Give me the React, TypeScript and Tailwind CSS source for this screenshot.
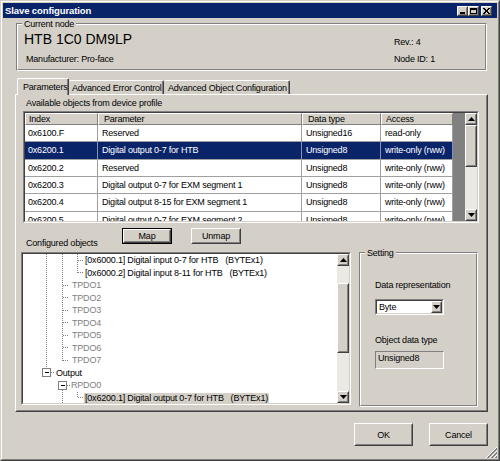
import React from 'react';

const F = "font-['Liberation_Sans',Arial,sans-serif]";

function Raised({ className = '', innerClassName = '', children }: { className?: string; innerClassName?: string; children?: React.ReactNode }) {
  return (
    <div className={`border border-t-white border-l-white border-r-[#404040] border-b-[#404040] ${className}`}>
      <div className={`w-full h-full border border-t-[#d4d0c8] border-l-[#d4d0c8] border-r-[#808080] border-b-[#808080] bg-[#d4d0c8] ${innerClassName}`}>
        {children}
      </div>
    </div>
  );
}

function Sunken({ className = '', innerClassName = '', children }: { className?: string; innerClassName?: string; children?: React.ReactNode }) {
  return (
    <div className={`border border-t-[#808080] border-l-[#808080] border-r-white border-b-white ${className}`}>
      <div className={`w-full h-full border border-t-[#404040] border-l-[#404040] border-r-[#d4d0c8] border-b-[#d4d0c8] ${innerClassName}`}>
        {children}
      </div>
    </div>
  );
}

function Etched({ className = '', legend, children, legendLeft = 'left-[5px]' }: { className?: string; legend: string; children?: React.ReactNode; legendLeft?: string }) {
  return (
    <div className={`relative border border-t-[#808080] border-l-[#808080] border-r-white border-b-white ${className}`}>
      <div className="w-full h-full border border-t-white border-l-white border-r-[#808080] border-b-[#808080]">
        {children}
      </div>
      <div className={`absolute -top-[6px] ${legendLeft} px-[2px] bg-[#d4d0c8] leading-[12px]`}>{legend}</div>
    </div>
  );
}

function Arrow({ down = false }: { down?: boolean }) {
  return (
    <svg width="7" height="4" viewBox="0 0 7 4" className="block">
      {down ? <polygon points="0,0 7,0 3.5,4" fill="#000" /> : <polygon points="0,4 7,4 3.5,0" fill="#000" />}
    </svg>
  );
}

function ScrollBtn({ down = false }: { down?: boolean }) {
  return (
    <Raised className="w-[12px] h-[12px] shrink-0" innerClassName="flex items-center justify-center">
      <Arrow down={down} />
    </Raised>
  );
}

function Thumb({ h }: { h: string }) {
  return <Raised className={`w-[12px] ${h} shrink-0`} />;
}

const rows = [
  ['0x6100.F', 'Reserved', 'Unsigned16', 'read-only'],
  ['0x6200.1', 'Digital output 0-7 for HTB', 'Unsigned8', 'write-only (rww)'],
  ['0x6200.2', 'Reserved', 'Unsigned8', 'write-only (rww)'],
  ['0x6200.3', 'Digital output 0-7 for EXM segment 1', 'Unsigned8', 'write-only (rww)'],
  ['0x6200.4', 'Digital output 8-15 for EXM segment 1', 'Unsigned8', 'write-only (rww)'],
  ['0x6200.5', 'Digital output 0-7 for EXM segment 2', 'Unsigned8', 'write-only (rww)'],
];

const colW = ['w-[73px]', 'w-[204px]', 'w-[79px]', 'w-[72px]'];
const headPad = ['pl-[3px]', 'pl-[5px]', 'pl-[5px]', 'pl-[4px]'];
const cellPad = ['pl-[3px]', 'pl-[4px]', 'pl-[4px]', 'pl-[4px]'];

type TreeRow = { text: string; pl: string; gray?: boolean; sel?: boolean; bytex?: boolean };
const tree: TreeRow[] = [
  { text: '[0x6000.1] Digital input 0-7 for HTB', pl: 'pl-[62px]', bytex: true },
  { text: '[0x6000.2] Digital input 8-11 for HTB', pl: 'pl-[62px]', bytex: true },
  { text: 'TPDO1', pl: 'pl-[49px]', gray: true },
  { text: 'TPDO2', pl: 'pl-[49px]', gray: true },
  { text: 'TPDO3', pl: 'pl-[49px]', gray: true },
  { text: 'TPDO4', pl: 'pl-[49px]', gray: true },
  { text: 'TPDO5', pl: 'pl-[49px]', gray: true },
  { text: 'TPDO6', pl: 'pl-[49px]', gray: true },
  { text: 'TPDO7', pl: 'pl-[49px]', gray: true },
  { text: 'Output', pl: 'pl-[33px]' },
  { text: 'RPDO0', pl: 'pl-[48px]', gray: true },
  { text: '[0x6200.1] Digital output 0-7 for HTB', pl: 'pl-[61px]', bytex: true, sel: true },
];

function TreeLines() {
  const d = { stroke: '#808080', strokeDasharray: '1 1', strokeWidth: 1 } as const;
  const hy = (k: number) => Math.floor(6.25 + 12.5 * k) + 0.5;
  return (
    <svg className="absolute inset-0" width="314" height="149" shapeRendering="crispEdges">
      <line x1="23.5" y1="0" x2="23.5" y2={hy(9) - 4} {...d} />
      <line x1="39.5" y1="0" x2="39.5" y2={hy(8)} {...d} />
      {[2, 3, 4, 5, 6, 7, 8].map((k) => (
        <line key={k} x1="39.5" y1={hy(k)} x2="46" y2={hy(k)} {...d} />
      ))}
      <line x1="39.5" y1={hy(10) + 4} x2="39.5" y2="149" {...d} />
      <line x1="54.5" y1="0" x2="54.5" y2={hy(1)} {...d} />
      <line x1="54.5" y1={hy(0)} x2="60" y2={hy(0)} {...d} />
      <line x1="54.5" y1={hy(1)} x2="60" y2={hy(1)} {...d} />
      <line x1="54.5" y1="137.5" x2="54.5" y2={hy(11)} {...d} />
      <line x1="54.5" y1={hy(11)} x2="60" y2={hy(11)} {...d} />
      <rect x="19.5" y={hy(9) - 4} width="8" height="8" fill="#fff" stroke="#808080" />
      <line x1="21.5" y1={hy(9)} x2="26" y2={hy(9)} stroke="#000" />
      <line x1="28" y1={hy(9)} x2="31" y2={hy(9)} {...d} />
      <rect x="35.5" y={hy(10) - 4} width="8" height="8" fill="#fff" stroke="#808080" />
      <line x1="37.5" y1={hy(10)} x2="42" y2={hy(10)} stroke="#000" />
      <line x1="44" y1={hy(10)} x2="47" y2={hy(10)} {...d} />
    </svg>
  );
}

function Tab({ label, w, sel, pl }: { label: string; w: string; sel?: boolean; pl: string }) {
  if (sel) {
    return (
      <div className={`${w} h-[17px] -mb-px relative z-10 bg-[#d4d0c8] border-l border-t border-white border-r border-r-[#404040] rounded-t-[2px]`}>
        <div className={`h-full border-r border-[#808080] ${pl} pt-[2px] whitespace-nowrap`}>{label}</div>
      </div>
    );
  }
  return (
    <div className={`${w} h-[14px] bg-[#d4d0c8] border-t border-white border-r border-r-[#404040] rounded-t-[2px]`}>
      <div className={`h-full border-r border-[#808080] ${pl} pt-[1px] whitespace-nowrap`}>{label}</div>
    </div>
  );
}

function CaptionBtn({ kind }: { kind: 'min' | 'max' | 'close' }) {
  return (
    <Raised className="w-[11px] h-[10px]" innerClassName="flex items-center justify-center">
      <svg width="7" height="6" viewBox="0 0 7 6" shapeRendering="crispEdges">
        {kind === 'min' && <rect x="1" y="4" width="5" height="2" fill="#000" />}
        {kind === 'max' && (
          <>
            <rect x="0.5" y="0.5" width="6" height="5" fill="none" stroke="#000" />
            <rect x="0" y="0" width="7" height="2" fill="#000" />
          </>
        )}
        {kind === 'close' && (
          <>
            <line x1="0.5" y1="0" x2="6.5" y2="6" stroke="#000" strokeWidth="1.4" />
            <line x1="6.5" y1="0" x2="0.5" y2="6" stroke="#000" strokeWidth="1.4" />
          </>
        )}
      </svg>
    </Raised>
  );
}

export default function App() {
  return (
    <div className={`${F} text-[9px] tracking-[-0.2px] leading-[12px] text-black w-[500px] h-[461px] bg-[#d4d0c8] border border-t-[#d4d0c8] border-l-[#d4d0c8] border-r-[#404040] border-b-[#404040]`}>
      <div className="w-full h-full border border-t-white border-l-white border-r-[#808080] border-b-[#808080] p-px flex flex-col relative">
        {/* Title bar */}
        <div className="h-[15px] shrink-0 bg-[#0a246a] flex items-center pl-[2px]">
          <span className="text-white font-bold text-[9.5px] tracking-[-0.1px] leading-[15px]">Slave configuration</span>
          <div className="ml-auto mr-[5px] flex items-center">
            <CaptionBtn kind="min" />
            <CaptionBtn kind="max" />
            <div className="w-[2px]" />
            <CaptionBtn kind="close" />
          </div>
        </div>

        {/* Current node */}
        <Etched legend="Current node" className="mt-[5px] ml-[13px] w-[471px] h-[48px] shrink-0">
          <div className="flex h-full">
            <div className="pl-[6px] pt-[6px] flex-1">
              <div className="text-[14px] tracking-normal leading-[16px]">HTB 1C0 DM9LP</div>
              <div className="mt-[6px] pl-[2px]">Manufacturer: Pro-face</div>
            </div>
            <div className="w-[91px] pt-[11px]">
              <div>Rev.: 4</div>
              <div className="mt-[5px]">Node ID: 1</div>
            </div>
          </div>
        </Etched>

        {/* Tabs */}
        <div className="mt-[7px] ml-[12px] h-[16px] flex items-end pl-[2px] shrink-0">
          <Tab label="Parameters" w="w-[52px]" sel pl="pl-[5px]" />
          <Tab label="Advanced Error Control" w="w-[95px]" pl="pl-[3px]" />
          <Tab label="Advanced Object Configuration" w="w-[126px]" pl="pl-[4px]" />
        </div>

        <Raised className="ml-[12px] w-[473px] h-[318px] shrink-0" innerClassName="pl-[6px] pt-px flex flex-col">
          <div className="ml-[3px] h-[12px]">Available objects from device profile</div>

          {/* Table */}
          <Sunken className="mt-[2px] w-[456px] h-[112px] shrink-0" innerClassName="flex overflow-hidden">
            <div className="w-[428px] h-full bg-white flex flex-col overflow-hidden">
              <div className="h-[12px] flex shrink-0">
                {['Index', 'Parameter', 'Data type', 'Access'].map((h, i) => (
                  <div key={h} className={`${colW[i]} h-full bg-[#d4d0c8] border-l border-t border-white border-r border-r-[#808080] border-b border-b-[#808080] ${headPad[i]} leading-[10px]`}>
                    {h}
                  </div>
                ))}
              </div>
              {rows.map((r, ri) => {
                const sel = ri === 1;
                return (
                  <div key={ri} className={`h-[17.33px] shrink-0 flex border-b border-[#a0a0a0] ${sel ? 'bg-[#0a246a] text-white' : ''}`}>
                    {r.map((c, ci) => (
                      <div key={ci} className={`${colW[ci]} h-full flex items-center border-r ${sel ? 'border-[#8a90b0]' : 'border-[#a0a0a0]'} ${cellPad[ci]} whitespace-nowrap overflow-hidden`}>
                        {c}
                      </div>
                    ))}
                  </div>
                );
              })}
            </div>
            <div className="w-[12px] h-full bg-[#808080]" />
            <div className="w-[12px] h-full flex flex-col bg-[#ebe9e4]">
              <ScrollBtn />
              <Thumb h="h-[42px]" />
              <div className="flex-1" />
              <ScrollBtn down />
            </div>
          </Sunken>

          {/* Map row */}
          <div className="mt-[5px] h-[24px] flex items-start shrink-0">
            <div className="ml-[3px] w-[96px] mt-[9px]">Configured objects</div>
            <div className="w-[50px] h-[16px] border border-black">
              <Raised className="w-full h-full" innerClassName="flex items-center justify-center">Map</Raised>
            </div>
            <Raised className="ml-[19px] w-[50px] h-[16px]" innerClassName="flex items-center justify-center">Unmap</Raised>
          </div>

          {/* Tree + Setting */}
          <div className="flex items-start">
            <Sunken className="-ml-[2px] w-[330px] h-[153px] shrink-0" innerClassName="flex">
              <div className="relative w-[314px] h-full bg-white overflow-hidden">
                <TreeLines />
                <div className="relative">
                  {tree.map((t, i) => (
                    <div key={i} className={`h-[12.5px] leading-[12.5px] whitespace-pre ${t.pl} ${t.gray ? 'text-[#808080]' : ''}`}>
                      <span className={t.sel ? 'bg-[#d4d0c8] px-px' : ''}>
                        {t.text}
                        {t.bytex ? '   (BYTEx1)' : ''}
                      </span>
                    </div>
                  ))}
                </div>
              </div>
              <div className="w-[12px] h-full flex flex-col bg-[#ebe9e4]">
                <ScrollBtn />
                <div className="h-[17px]" />
                <Thumb h="h-[70px]" />
                <div className="flex-1" />
                <ScrollBtn down />
              </div>
            </Sunken>

            <Etched legend="Setting" className="ml-[8px] w-[119px] h-[155px] shrink-0">
              <div className="pl-[14px] pt-[25px] flex flex-col">
                <div>Data representation</div>
                <Sunken className="mt-[8px] w-[69px] h-[16px]" innerClassName="bg-white flex items-center">
                  <span className="pl-[2px] flex-1">Byte</span>
                  <Raised className="w-[11px] h-[12px]" innerClassName="flex items-center justify-center">
                    <Arrow down />
                  </Raised>
                </Sunken>
                <div className="mt-[19px]">Object data type</div>
                <div className="mt-[5px] w-[69px] h-[18px] border border-t-[#808080] border-l-[#808080] border-r-white border-b-white pl-[2px] leading-[12px]">
                  Unsigned8
                </div>
              </div>
            </Etched>
          </div>
        </Raised>

        {/* Bottom buttons */}
        <div className="mt-[11px] flex shrink-0">
          <Raised className="ml-[351px] w-[59px] h-[23px]" innerClassName="flex items-center justify-center">OK</Raised>
          <Raised className="ml-[16px] w-[59px] h-[23px]" innerClassName="flex items-center justify-center">Cancel</Raised>
        </div>

        <svg className="absolute right-[1px] bottom-[1px]" width="12" height="12" viewBox="0 0 12 12" shapeRendering="crispEdges">
          {[0, 4, 8].map((o) => (
            <g key={o}>
              <line x1={1 + o} y1="12" x2="12" y2={1 + o} stroke="#fff" />
              <line x1={2 + o} y1="12" x2="12" y2={2 + o} stroke="#808080" />
              <line x1={3 + o} y1="12" x2="12" y2={3 + o} stroke="#808080" />
            </g>
          ))}
        </svg>
      </div>
    </div>
  );
}
